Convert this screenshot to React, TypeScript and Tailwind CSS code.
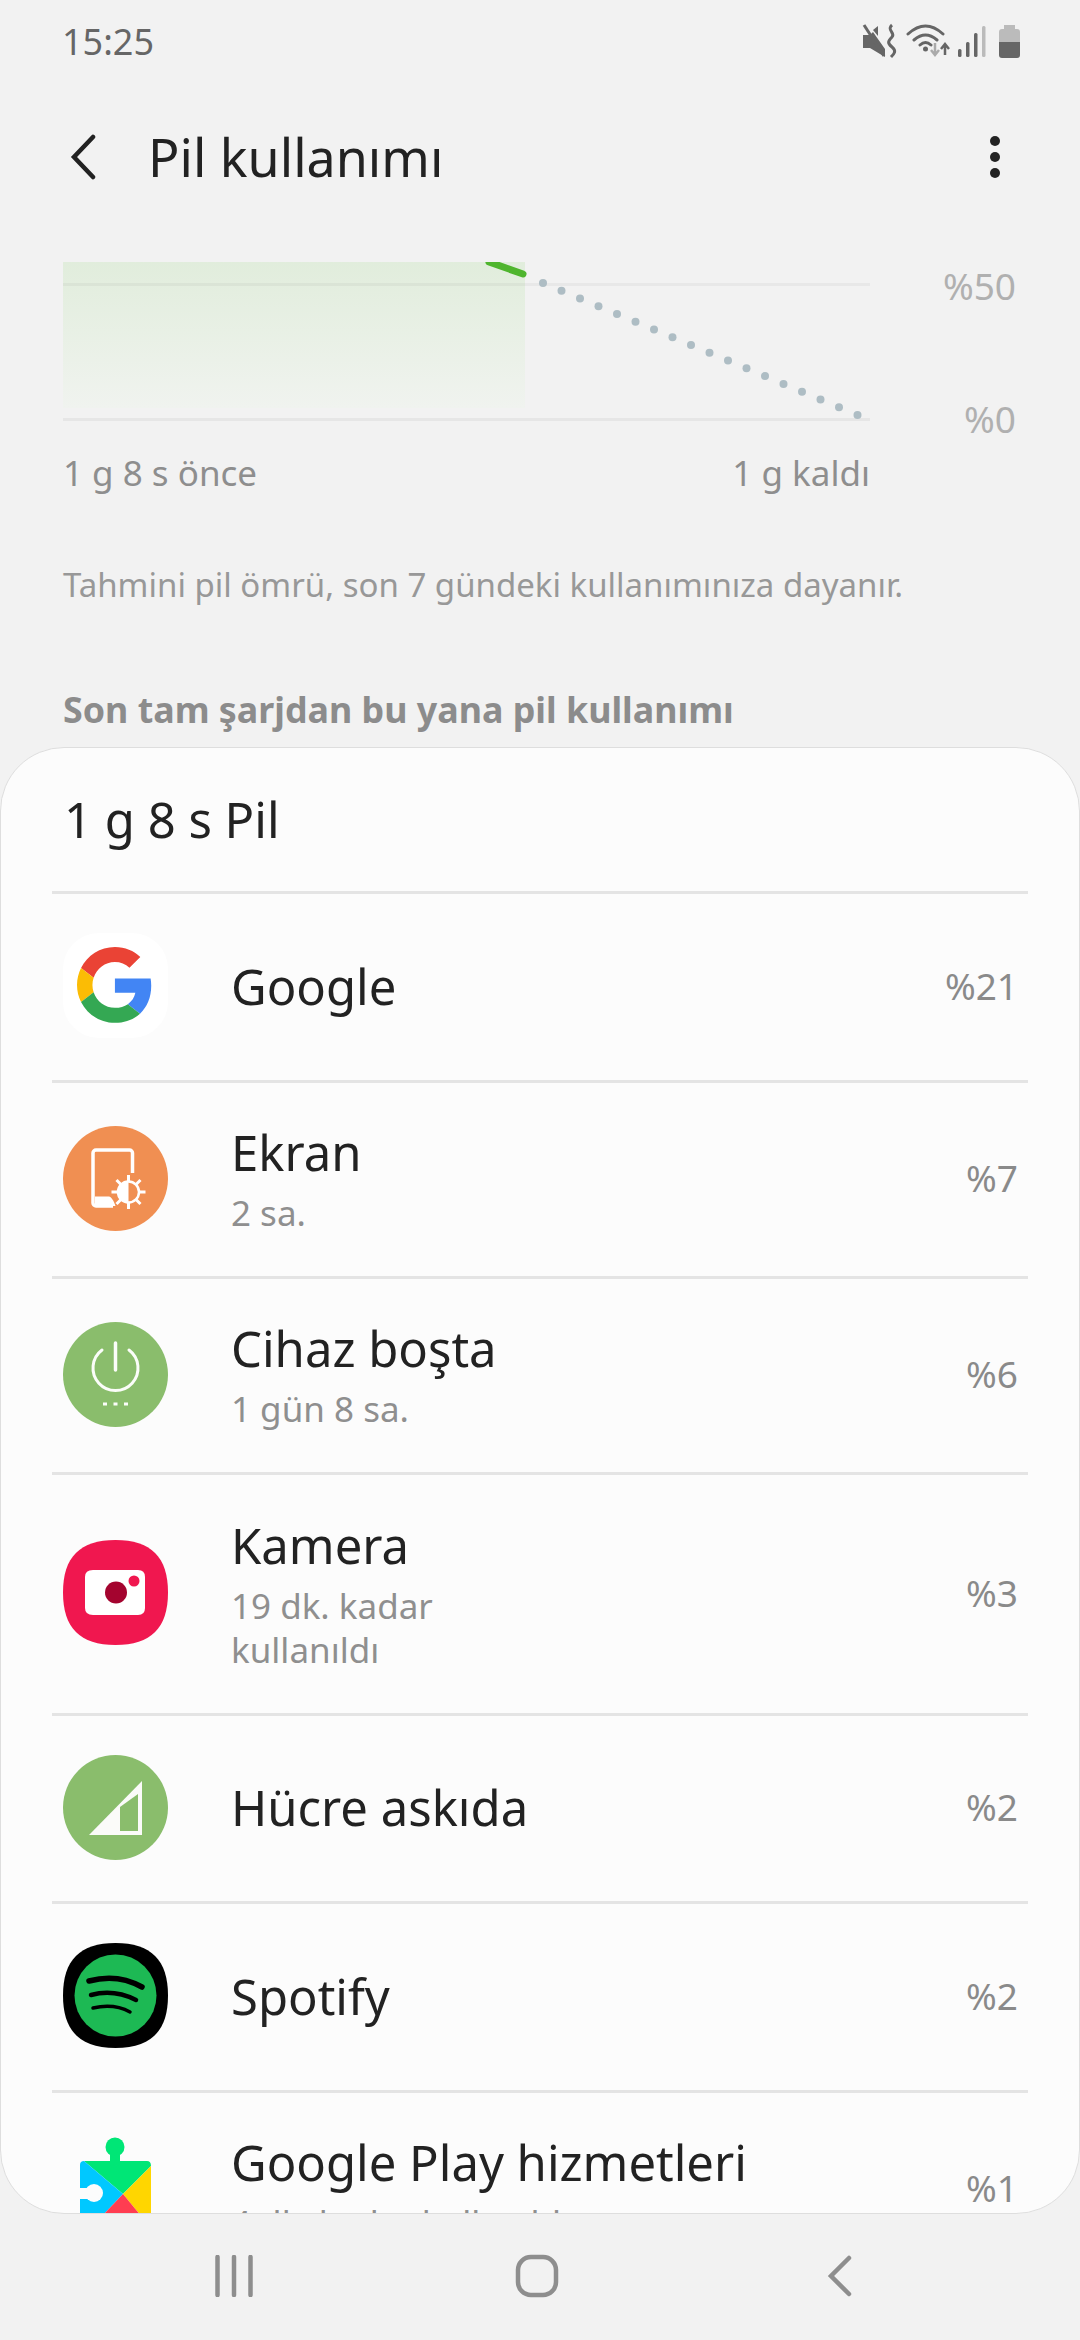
import React from 'react';

const FONT = "font-['Noto_Sans',sans-serif]";

const GoogleIcon = () => (
  <svg viewBox="0 0 105 105" className="w-[105px] h-[105px]">
    <rect width="105" height="105" rx="36" fill="#ffffff" />
    <g transform="translate(14 14) scale(1.58)">
      <path fill="#EA4335" d="M24 9.5c3.54 0 6.71 1.22 9.21 3.6l6.85-6.85C35.9 2.38 30.47 0 24 0 14.62 0 6.51 5.38 2.56 13.22l7.98 6.19C12.43 13.72 17.74 9.5 24 9.5z" />
      <path fill="#4285F4" d="M46.98 24.55c0-1.57-.15-3.09-.38-4.55H24v9.02h12.94c-.58 2.96-2.26 5.48-4.78 7.18l7.73 6c4.51-4.18 7.09-10.36 7.09-17.65z" />
      <path fill="#FBBC05" d="M10.53 28.59c-.48-1.45-.76-2.99-.76-4.59s.27-3.14.76-4.59l-7.98-6.19C.92 16.46 0 20.12 0 24c0 3.88.92 7.54 2.56 10.78l7.97-6.19z" />
      <path fill="#34A853" d="M24 48c6.48 0 11.93-2.13 15.89-5.81l-7.73-6c-2.15 1.45-4.92 2.3-8.16 2.3-6.26 0-11.57-4.22-13.47-9.91l-7.98 6.19C6.51 42.62 14.62 48 24 48z" />
    </g>
  </svg>
);

const ScreenIcon = () => (
  <svg viewBox="0 0 105 105" className="w-[105px] h-[105px]">
    <circle cx="52.500" cy="52.500" r="52.500" fill="#F08F52" />
    <path d="M69.500 47V27a3 3 0 0 0-3-3H33a3 3 0 0 0-3 3v50a3 3 0 0 0 3 3h17" fill="none" stroke="#fff" strokeWidth="3.500" strokeLinejoin="round" />
    <path d="M32 70.500h14c2 0 5 4.500 6.500 9.500H32z" fill="#fff" />
    <circle cx="65.500" cy="66" r="10.500" fill="none" stroke="#fff" strokeWidth="2.500" />
    <path d="M65.500 55.500a10.500 10.500 0 0 0 0 21z" fill="#fff" />
    <path d="M65.500 49v7M65.500 76v7M48.500 66h7M75.500 66h7M53.500 54l5 5M72.500 73l5 5M53.500 78l5-5M72.500 59l5-5" stroke="#fff" strokeWidth="3" />
  </svg>
);

const IdleIcon = () => (
  <svg viewBox="0 0 105 105" className="w-[105px] h-[105px]">
    <circle cx="52.500" cy="52.500" r="52.500" fill="#8ABD6C" />
    <path d="M39 28a22.500 22.500 0 1 0 27 0" fill="none" stroke="#fbfdf9" strokeWidth="3" strokeLinecap="round" />
    <path d="M52.500 21v27" stroke="#fbfdf9" strokeWidth="3.500" strokeLinecap="round" />
    <path d="M40 82h4M50.500 82h4M61 82h4" stroke="#fbfdf9" strokeWidth="3" />
  </svg>
);

const CameraIcon = () => (
  <svg viewBox="0 0 105 105" className="w-[105px] h-[105px]">
    <path d="M52.500 0C88 0 105 17 105 52.500S88 105 52.500 105 0 88 0 52.500 17 0 52.500 0z" fill="#F0174F" />
    <path d="M30 30h45q7 0 7 7v31q0 7-7 7H30q-8 0-8-7V37q0-7 8-7z" fill="#fff" />
    <circle cx="53" cy="52.500" r="11" fill="#A4042F" />
    <circle cx="71" cy="41" r="5.500" fill="#F0174F" />
  </svg>
);

const CellIcon = () => (
  <svg viewBox="0 0 105 105" className="w-[105px] h-[105px]">
    <circle cx="52.500" cy="52.500" r="52.500" fill="#8ABD6C" />
    <path d="M79 26v54H26z" fill="#fbfbf9" />
    <path d="M57 52l18-13v37H57z" fill="#8ABD6C" />
  </svg>
);

const SpotifyIcon = () => (
  <svg viewBox="0 0 105 105" className="w-[105px] h-[105px]">
    <path d="M52.500 0C88 0 105 17 105 52.500S88 105 52.500 105 0 88 0 52.500 17 0 52.500 0z" fill="#000000" />
    <circle cx="52.500" cy="52.500" r="41" fill="#1DB954" />
    <path d="M26 38c18-5 37-3 53 6" fill="none" stroke="#000" strokeWidth="5.500" strokeLinecap="round" />
    <path d="M28 52c15-4 31-2 45 5" fill="none" stroke="#000" strokeWidth="4.500" strokeLinecap="round" />
    <path d="M30 65c13-3 26-2 37 4" fill="none" stroke="#000" strokeWidth="3.500" strokeLinecap="round" />
  </svg>
);

const PlayIcon = () => (
  <svg viewBox="0 0 105 105" className="w-[105px] h-[105px] overflow-visible">
    <circle cx="52" cy="11" r="9.500" fill="#00E676" />
    <rect x="47" y="15" width="10" height="12" fill="#00E676" />
    <path d="M21 25h63q4 0 4 5L60 58z" fill="#00E676" />
    <path d="M21 25q-4 0-4 4v71h3L60 58z" fill="#00C8FF" />
    <path d="M88 30v62L60 58z" fill="#FFD600" />
    <path d="M60 58l28 34v8H20z" fill="#FF3D51" />
    <circle cx="31" cy="57" r="9" fill="#fcfcfc" />
    <rect x="17" y="52" width="14" height="11" fill="#fcfcfc" />
  </svg>
);

type AppRow = {
  name: string;
  sub?: string[];
  pct: string;
  icon: React.ReactNode;
  rowClass: string;
};

const ROWS: AppRow[] = [
  { name: 'Google', pct: '%21', icon: <GoogleIcon />, rowClass: 'h-[189px]' },
  { name: 'Ekran', sub: ['2 sa.'], pct: '%7', icon: <ScreenIcon />, rowClass: 'h-[196px]' },
  { name: 'Cihaz boşta', sub: ['1 gün 8 sa.'], pct: '%6', icon: <IdleIcon />, rowClass: 'h-[196px]' },
  { name: 'Kamera', sub: ['19 dk. kadar', 'kullanıldı'], pct: '%3', icon: <CameraIcon />, rowClass: 'h-[241px]' },
  { name: 'Hücre askıda', pct: '%2', icon: <CellIcon />, rowClass: 'h-[188px]' },
  { name: 'Spotify', pct: '%2', icon: <SpotifyIcon />, rowClass: 'h-[189px]' },
  { name: 'Google Play hizmetleri', sub: ['4 dk. kadar kullanıldı'], pct: '%1', icon: <PlayIcon />, rowClass: 'h-[196px]' },
];

const StatusIcons = () => (
  <svg viewBox="0 0 160 40" className="w-[160px] h-[40px]">
    {/* muted speaker */}
    <path d="M2 13h7l3-3 12 17v8l-15-9H2z" fill="#666" />
    <path d="M12 8l5-4v10z" fill="#666" />
    <path d="M3 3l20 31" stroke="#666" strokeWidth="3" />
    <path d="M31 3c-6 5 4 8 0 12s-5 6 0 10 2 7-1 10" fill="none" stroke="#666" strokeWidth="3" />
    {/* wifi with arrows */}
    <path d="M47 12Q64.500-4 82 12M53 18Q64.500 8 76 18M59 23Q64.500 18 70 23" fill="none" stroke="#666" strokeWidth="3" strokeLinecap="round" />
    <circle cx="64.500" cy="27" r="2.500" fill="#666" />
    <path d="M74 21v12M70 28l4 5 4-5" fill="none" stroke="#aaa" strokeWidth="2.500" />
    <path d="M84 33V22M80 27l4-5 4 5" fill="none" stroke="#666" strokeWidth="2.500" />
    {/* signal */}
    <rect x="97" y="27" width="3.500" height="8" rx="1.500" fill="#666" />
    <rect x="105" y="20" width="3.500" height="15" rx="1.500" fill="#666" />
    <rect x="113" y="11" width="3.500" height="24" rx="1.500" fill="#666" />
    <rect x="121" y="4" width="3.500" height="31" rx="1.500" fill="#bbb" />
    {/* battery */}
    <path d="M143 7V3h11v4h2a3 3 0 0 1 3 3v10h-21V10a3 3 0 0 1 3-3z" fill="#bbb" />
    <path d="M138 20h21v13a3 3 0 0 1-3 3h-15a3 3 0 0 1-3-3z" fill="#666" />
  </svg>
);

const Chart = () => {
  // dotted projection from the end of the green line down to 0%
  const dots = Array.from({ length: 18 }, (_, i) => ({ x: 480 + i * 18.5, y: 21 + i * 7.76 }));
  return (
    <svg viewBox="0 0 807 160" className="w-[807px] h-[160px]">
      <defs>
        <linearGradient id="fade" x1="0" y1="0" x2="0" y2="1">
          <stop offset="0" stopColor="#e1eddc" />
          <stop offset="1" stopColor="#f0f3ef" />
        </linearGradient>
      </defs>
      <rect x="0" y="0" width="462" height="146" fill="url(#fade)" />
      <rect x="0" y="21" width="807" height="3" fill="#000" fillOpacity="0.04" />
      <rect x="0" y="156" width="807" height="3" fill="#e6e6e6" />
      <path d="M426 0 L460 12" stroke="#4FB52E" strokeWidth="7" strokeLinecap="round" />
      <rect x="400" y="-10" width="60" height="10" fill="#f2f2f2" />
      {dots.map((d) => (
        <circle key={d.x} cx={d.x} cy={d.y} r="4" fill="#AEBDC4" />
      ))}
    </svg>
  );
};

export default function App() {
  return (
    <div className={`${FONT} w-[1080px] h-[2340px] bg-[#f2f2f2] overflow-hidden flex flex-col`}>
      {/* status bar */}
      <div className="h-[84px] pl-[62px] pr-[59px] flex items-center justify-between shrink-0">
        <span className="text-[36px] leading-none text-[#666]">15:25</span>
        <StatusIcons />
      </div>

      {/* header */}
      <div className="h-[146px] pl-[68px] pr-[80px] flex items-center shrink-0">
        <svg viewBox="0 0 30 46" className="w-[30px] h-[46px]">
          <path d="M25 3L6 23l19 20" fill="none" stroke="#222" strokeWidth="4.500" strokeLinecap="round" />
        </svg>
        <h1 className="ml-[50px] text-[52px] leading-none text-[#222] font-normal">Pil kullanımı</h1>
        <div className="ml-auto flex flex-col gap-[6px]">
          <div className="w-[10px] h-[10px] rounded-full bg-[#222]" />
          <div className="w-[10px] h-[10px] rounded-full bg-[#222]" />
          <div className="w-[10px] h-[10px] rounded-full bg-[#222]" />
        </div>
      </div>

      {/* chart */}
      <div className="pl-[63px] pr-[64px] pt-[32px] shrink-0">
        <div className="flex justify-between h-[160px]">
          <Chart />
          <div className="flex flex-col items-end text-[37px] leading-none text-[#b0b0b0] pt-[5px]">
            <span>%50</span>
            <span className="mt-[96px]">%0</span>
          </div>
        </div>
        <div className="w-[807px] mt-[29px] flex justify-between text-[35px] leading-[44px] text-[#8e8e8e]">
          <span>1 g 8 s önce</span>
          <span>1 g kaldı</span>
        </div>
      </div>

      <p className="pl-[63px] mt-[67px] text-[33px] leading-[46px] text-[#989898] shrink-0">
        Tahmini pil ömrü, son 7 gündeki kullanımınıza dayanır.
      </p>
      <h2 className="pl-[63px] mt-[78px] text-[35.8px] leading-[46px] font-bold text-[#8c8c8c] shrink-0">
        Son tam şarjdan bu yana pil kullanımı
      </h2>

      {/* usage card */}
      <div className="mt-[15px] h-[1467px] shrink-0 bg-[#fcfcfc] border border-[#dedede] rounded-[64px] overflow-hidden">
        <div className="h-[143px] pl-[63px] flex items-center text-[49px] text-[#222]">1 g 8 s Pil</div>
        {ROWS.map((row) => (
          <div key={row.name} className={`${row.rowClass} mx-[51px] pb-[3px] border-t-[3px] border-[#e4e4e4] flex items-center`}>
            <div className="ml-[11px] w-[105px] shrink-0">{row.icon}</div>
            <div className="ml-[63px] flex-1">
              <div className="text-[49px] leading-[62px] text-[#222]">{row.name}</div>
              {row.sub && (
                <div className="mt-[8px] text-[35px] leading-[44px] text-[#8f8f8f]">
                  {row.sub.map((line) => (
                    <div key={line}>{line}</div>
                  ))}
                </div>
              )}
            </div>
            <span className="mr-[10px] text-[37px] text-[#8a8a8a]">{row.pct}</span>
          </div>
        ))}
      </div>

      {/* nav bar */}
      <div className="flex-1 flex items-center pl-[215px] pb-[2px]">
        <svg viewBox="0 0 38 42" className="w-[38px] h-[42px]">
          <path d="M2.500 2v38M19 2v38M35.500 2v38" stroke="#8e8e8e" strokeWidth="4.500" strokeLinecap="round" />
        </svg>
        <svg viewBox="0 0 44 44" className="ml-[262px] w-[44px] h-[44px]">
          <rect x="3" y="3" width="38" height="38" rx="13" fill="none" stroke="#8e8e8e" strokeWidth="4.500" />
        </svg>
        <svg viewBox="0 0 26 42" className="ml-[268px] w-[26px] h-[42px]">
          <path d="M22 3L4 21l18 18" fill="none" stroke="#8e8e8e" strokeWidth="4.500" strokeLinecap="round" />
        </svg>
      </div>
    </div>
  );
}
